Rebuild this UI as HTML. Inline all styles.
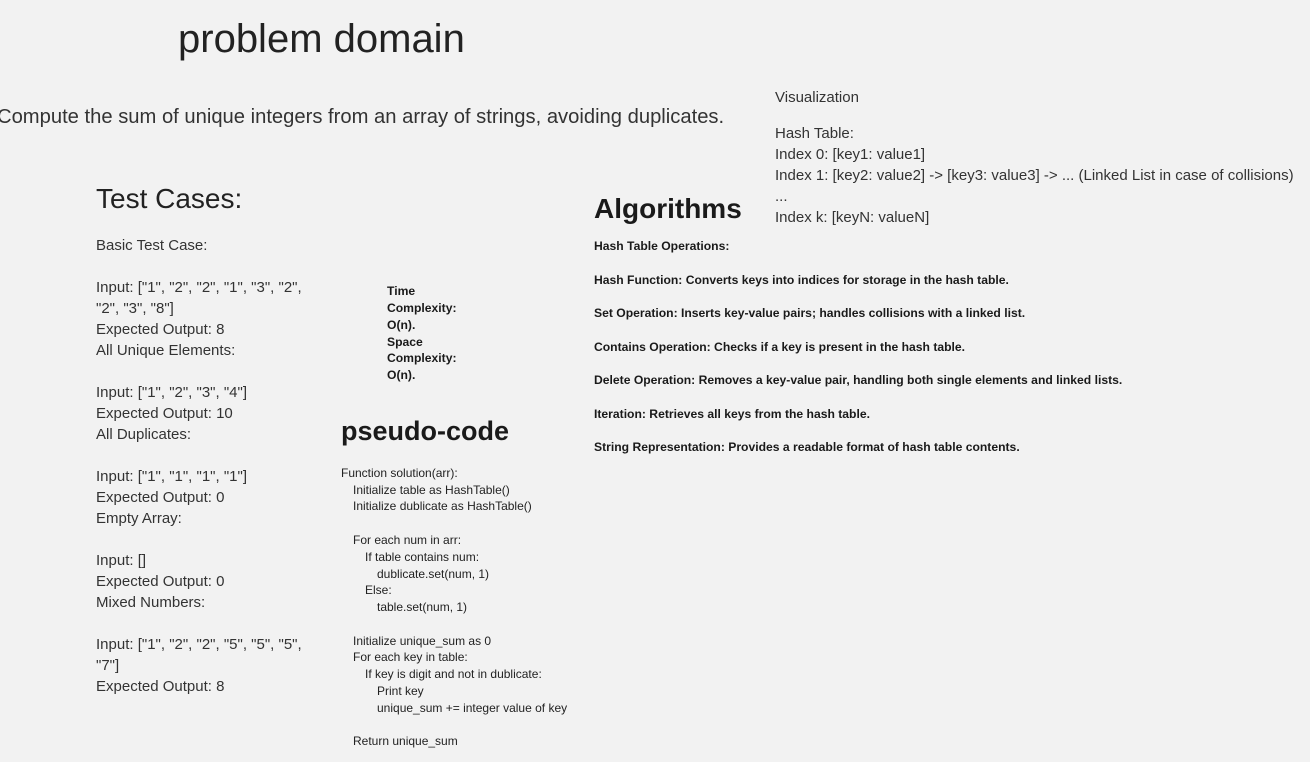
<!DOCTYPE html>
<html><head><meta charset="utf-8"><style>
html,body{margin:0;padding:0;background:#f2f2f2;width:1310px;height:762px;overflow:hidden;position:relative;font-family:"Liberation Sans","DejaVu Sans",sans-serif;color:#1a1a1a}
.l{position:absolute;white-space:pre;line-height:20px;height:20px}
.r{font-size:15px;color:#333}
.s{font-size:12px;color:#222}
.b{font-size:12.15px;font-weight:bold;color:#1a1a1a}
</style></head><body>
<div class="l" style="left:178px;top:17px;font-size:40px;line-height:44px;height:44px;color:#222">problem domain</div>
<div class="l r" style="left:-3px;top:106px;font-size:20.2px;line-height:22px">Compute the sum of unique integers from an array of strings, avoiding duplicates.</div>

<div class="l" style="left:96px;top:182px;font-size:28px;line-height:34px;height:34px;color:#222">Test Cases:</div>
<div class="l r" style="left:96px;top:236px">Basic Test Case:</div>
<div class="l r" style="left:96px;top:278px">Input: ["1", "2", "2", "1", "3", "2",</div>
<div class="l r" style="left:96px;top:299px">"2", "3", "8"]</div>
<div class="l r" style="left:96px;top:320px">Expected Output: 8</div>
<div class="l r" style="left:96px;top:341px">All Unique Elements:</div>
<div class="l r" style="left:96px;top:383px">Input: ["1", "2", "3", "4"]</div>
<div class="l r" style="left:96px;top:404px">Expected Output: 10</div>
<div class="l r" style="left:96px;top:425px">All Duplicates:</div>
<div class="l r" style="left:96px;top:467px">Input: ["1", "1", "1", "1"]</div>
<div class="l r" style="left:96px;top:488px">Expected Output: 0</div>
<div class="l r" style="left:96px;top:509px">Empty Array:</div>
<div class="l r" style="left:96px;top:551px">Input: []</div>
<div class="l r" style="left:96px;top:572px">Expected Output: 0</div>
<div class="l r" style="left:96px;top:593px">Mixed Numbers:</div>
<div class="l r" style="left:96px;top:635px">Input: ["1", "2", "2", "5", "5", "5",</div>
<div class="l r" style="left:96px;top:656px">"7"]</div>
<div class="l r" style="left:96px;top:677px">Expected Output: 8</div>

<div class="l b" style="left:387px;top:281px">Time</div>
<div class="l b" style="left:387px;top:298px">Complexity:</div>
<div class="l b" style="left:387px;top:315px">O(n).</div>
<div class="l b" style="left:387px;top:332px">Space</div>
<div class="l b" style="left:387px;top:348px">Complexity:</div>
<div class="l b" style="left:387px;top:365px">O(n).</div>

<div class="l" style="left:341px;top:414px;font-size:27px;font-weight:bold;line-height:34px;height:34px">pseudo-code</div>
<div class="l s" style="left:341px;top:463px">Function solution(arr):</div>
<div class="l s" style="left:353px;top:480px">Initialize table as HashTable()</div>
<div class="l s" style="left:353px;top:496px">Initialize dublicate as HashTable()</div>
<div class="l s" style="left:353px;top:530px">For each num in arr:</div>
<div class="l s" style="left:365px;top:547px">If table contains num:</div>
<div class="l s" style="left:377px;top:564px">dublicate.set(num, 1)</div>
<div class="l s" style="left:365px;top:580px">Else:</div>
<div class="l s" style="left:377px;top:597px">table.set(num, 1)</div>
<div class="l s" style="left:353px;top:631px">Initialize unique_sum as 0</div>
<div class="l s" style="left:353px;top:647px">For each key in table:</div>
<div class="l s" style="left:365px;top:664px">If key is digit and not in dublicate:</div>
<div class="l s" style="left:377px;top:681px">Print key</div>
<div class="l s" style="left:377px;top:698px">unique_sum += integer value of key</div>
<div class="l s" style="left:353px;top:731px">Return unique_sum</div>

<div class="l" style="left:594px;top:192px;font-size:28px;font-weight:bold;line-height:34px;height:34px">Algorithms</div>
<div class="l b" style="left:594px;top:236px">Hash Table Operations:</div>
<div class="l b" style="left:594px;top:270px">Hash Function: Converts keys into indices for storage in the hash table.</div>
<div class="l b" style="left:594px;top:303px">Set Operation: Inserts key-value pairs; handles collisions with a linked list.</div>
<div class="l b" style="left:594px;top:337px">Contains Operation: Checks if a key is present in the hash table.</div>
<div class="l b" style="left:594px;top:370px">Delete Operation: Removes a key-value pair, handling both single elements and linked lists.</div>
<div class="l b" style="left:594px;top:404px">Iteration: Retrieves all keys from the hash table.</div>
<div class="l b" style="left:594px;top:437px">String Representation: Provides a readable format of hash table contents.</div>

<div class="l r" style="left:775px;top:88px">Visualization</div>
<div class="l r" style="left:775px;top:124px">Hash Table:</div>
<div class="l r" style="left:775px;top:145px">Index 0: [key1: value1]</div>
<div class="l r" style="left:775px;top:166px">Index 1: [key2: value2] -&gt; [key3: value3] -&gt; ... (Linked List in case of collisions)</div>
<div class="l r" style="left:775px;top:187px">...</div>
<div class="l r" style="left:775px;top:208px">Index k: [keyN: valueN]</div>
</body></html>
